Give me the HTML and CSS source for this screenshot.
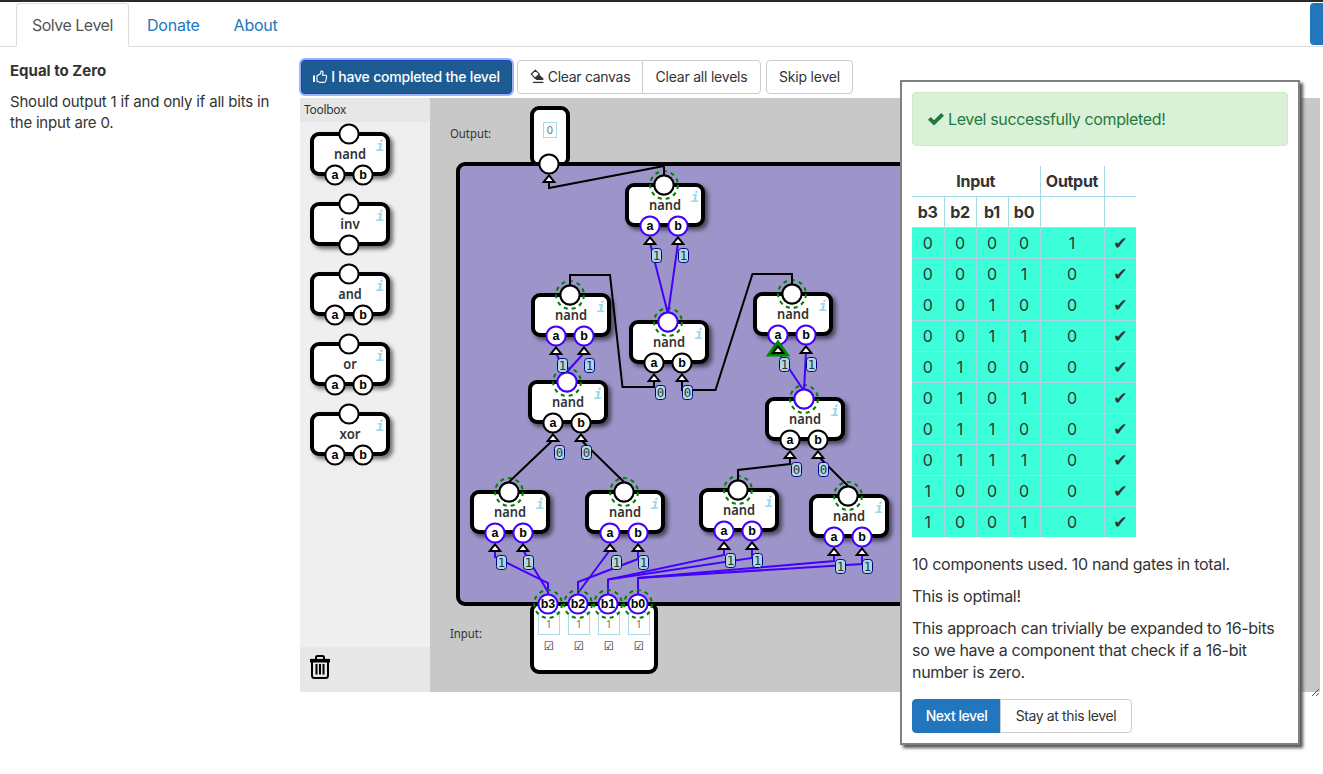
FILE: index.html
```html
<!DOCTYPE html>
<html lang="en">
<head>
<meta charset="utf-8">
<title>Equal to Zero</title>
<link rel="stylesheet" href="styles.css">
</head>
<body>
<header class="topnav">
  <nav class="tabs">
    <a class="tab active">Solve Level</a>
    <a class="tab">Donate</a>
    <a class="tab">About</a>
  </nav>
  <div class="nav-action"></div>
</header>
<main class="layout">
  <aside class="mission">
    <h1>Equal to Zero</h1>
    <p>Should output 1 if and only if all bits in the input are 0.</p>
  </aside>
  <section class="workspace">
    <div class="toolbar">
      <button class="btn primary focused"><svg class="ico-thumb" width="15" height="14" viewBox="0 0 15 14"><path class="thumb-bar" d="M1 5.5V12"/><path class="thumb-hand" d="M4 5.8 L7.4 3.8 Q8.2 2.6 8 1 Q10 .6 10 2.6 Q10 4 9.4 5.2 H12.8 Q14 5.6 13.6 7 L12.6 11.4 Q12.2 12.4 11 12.4 H7.2 L4 11.2Z"/></svg><span>I have completed the level</span></button>
      <div class="group">
        <button class="btn clear"><svg class="ico-eraser" width="15" height="15" viewBox="0 0 15 15"><path class="er-fill" d="M8 4.6 L13 9 Q14.4 11 12.5 11 H6.5 L3.6 8.2Z"/><path class="er-paper" d="M5.3 1.2 L9.3 5.2 L5.2 9.2 L1.2 5.2Z"/><path class="er-line" d="M3 13.4H13.4"/></svg><span>Clear canvas</span></button>
        <button class="btn clear-all">Clear all levels</button>
      </div>
      <button class="btn skip">Skip level</button>
    </div>
    <div class="editor">
      <div class="toolbox">
        <div class="toolbox-title">Toolbox</div>
        <svg class="palette" id="palette" width="130" height="525" viewBox="300 122 130 525"></svg>
        <div class="trash"><svg width="22" height="26" viewBox="0 0 22 26"><path class="trash-lid" d="M1 6.7H21"/><path class="trash-line" d="M7 5V3.5Q7 2 8.5 2H13.5Q15 2 15 3.5V5 M3 7V21.5Q3 24 5.5 24H16.5Q19 24 19 21.5V7"/><path class="trash-line" d="M7.5 10V20.5 M11 10V20.5 M14.5 10V20.5"/></svg></div>
      </div>
      <svg class="board" id="board" width="890" height="594" viewBox="430 98 890 594">
        <text class="io-label" x="450" y="138" textLength="41" lengthAdjust="spacingAndGlyphs">Output:</text>
        <text class="io-label" x="450" y="638" textLength="32" lengthAdjust="spacingAndGlyphs">Input:</text>
        <rect class="shell" x="532" y="108" width="36" height="57" rx="7"/>
        <rect class="shell" x="532" y="604" width="124" height="68" rx="7"/>
        <rect class="frame" x="458" y="164" width="830" height="440" rx="7"/>
        <path class="seam" d="M536 606.5H652V612H536Z"/>
      </svg>
    </div>
    <svg class="grip" width="9" height="8" viewBox="0 0 9 8"><path d="M1 7L8 0M5 7L8 4"/></svg>
  </section>
</main>
<section class="dialog">
  <div class="alert"><svg width="16" height="14" viewBox="0 0 16 14"><path d="M0 7.8L2.8 5L6 8.2L13.2 1L16 3.8L6 13.6Z"/></svg><span>Level successfully completed!</span></div>
  <table class="truth">
    <colgroup><col class="bit"><col class="bit"><col class="bit"><col class="bit"><col class="out"><col class="mark"></colgroup>
    <thead>
      <tr><th colspan="4">Input</th><th>Output</th><th></th></tr>
      <tr><th>b3</th><th>b2</th><th>b1</th><th>b0</th><th></th><th></th></tr>
    </thead>
    <tbody>
      <tr><td>0</td><td>0</td><td>0</td><td>0</td><td>1</td><td class="ok">✔</td></tr>
      <tr><td>0</td><td>0</td><td>0</td><td>1</td><td>0</td><td class="ok">✔</td></tr>
      <tr><td>0</td><td>0</td><td>1</td><td>0</td><td>0</td><td class="ok">✔</td></tr>
      <tr><td>0</td><td>0</td><td>1</td><td>1</td><td>0</td><td class="ok">✔</td></tr>
      <tr><td>0</td><td>1</td><td>0</td><td>0</td><td>0</td><td class="ok">✔</td></tr>
      <tr><td>0</td><td>1</td><td>0</td><td>1</td><td>0</td><td class="ok">✔</td></tr>
      <tr><td>0</td><td>1</td><td>1</td><td>0</td><td>0</td><td class="ok">✔</td></tr>
      <tr><td>0</td><td>1</td><td>1</td><td>1</td><td>0</td><td class="ok">✔</td></tr>
      <tr><td>1</td><td>0</td><td>0</td><td>0</td><td>0</td><td class="ok">✔</td></tr>
      <tr><td>1</td><td>0</td><td>0</td><td>1</td><td>0</td><td class="ok">✔</td></tr>
    </tbody>
  </table>
  <p>10 components used. 10 nand gates in total.</p>
  <p>This is optimal!</p>
  <p>This approach can trivially be expanded to 16-bits<br>so we have a component that check if a 16-bit<br>number is zero.</p>
  <div class="group">
    <button class="btn primary next">Next level</button>
    <button class="btn stay">Stay at this level</button>
  </div>
</section>
<script src="app.js"></script>
</body>
</html>
```
FILE: styles.css
```css
* { box-sizing: border-box; }
body {
  margin: 0;
  height: 774px;
  overflow: hidden;
  position: relative;
  background: #fff;
  color: #333;
  font-family: Inter, "Liberation Sans", sans-serif;
  font-size: 16px;
}
svg { display: block; flex: none; }
.topnav {
  height: 47px;
  border-top: 2px solid #2a292c;
  border-bottom: 1px solid #ddd;
  padding: 1px 0 0 16px;
  display: flex;
  justify-content: space-between;
}
.tabs { display: flex; height: 44px; }
.tab {
  height: 43px;
  padding: 0 15px;
  border: 1px solid transparent;
  border-radius: 4px 4px 0 0;
  line-height: 43px;
  color: #2276bd;
  margin-right: 2px;
  letter-spacing: -0.23px;
  white-space: nowrap;
}
.tab.active {
  width: 113px;
  height: 44px;
  background: #fff;
  border-color: #ddd #ddd #fff;
  color: #555;
  letter-spacing: -0.5px;
}
.nav-action { width: 13px; height: 42px; background: #2276bd; border-radius: 4px 0 0 4px; }
.layout { display: flex; }
.mission { width: 300px; padding: 13px 20px 0 10px; font-size: 15px; line-height: 21px; }
.mission h1 { margin: 0 0 10px; font-size: 15px; line-height: 21px; font-weight: 700; }
.mission p { margin: 0; letter-spacing: -0.2px; }
.workspace { width: 1020px; padding-top: 13px; }
.toolbar { display: flex; height: 34px; margin-bottom: 4px; padding-left: 1px; gap: 5px; }
.group { display: flex; }
.btn {
  display: flex;
  align-items: center;
  justify-content: center;
  height: 34px;
  padding: 0 0 1px;
  border: 1px solid #ccc;
  border-radius: 4px;
  background: #fff;
  color: #333;
  font: 400 14px Inter, "Liberation Sans", sans-serif;
  letter-spacing: -0.22px;
  white-space: nowrap;
}
.btn.primary { background: #2276bd; border-color: #2276bd; color: #fff; font-weight: 500; }
.btn.focused { width: 211px; background: #1d5c92; border-color: #1544b5; box-shadow: 0 0 0 2px #9cb3fa; }
.btn.clear { width: 126px; letter-spacing: -0.3px; }
.btn.clear-all { width: 119px; }
.btn.skip { width: 87px; }
.group .btn:first-child { border-radius: 4px 0 0 4px; }
.group .btn:last-child { border-radius: 0 4px 4px 0; margin-left: -1px; }
.ico-thumb { margin-right: 3px; }
.thumb-bar { stroke: #fff; stroke-width: 2; }
.thumb-hand { fill: none; stroke: #fff; stroke-width: 1.1; stroke-linejoin: round; }
.ico-eraser { margin-right: 3px; }
.er-fill { fill: #333; }
.er-paper { fill: #fff; stroke: #333; stroke-width: 1.2; stroke-linejoin: round; }
.er-line { fill: none; stroke: #333; stroke-width: 1.3; }
.editor { display: flex; height: 594px; }
.toolbox { width: 130px; background: #efefef; }
.toolbox-title {
  height: 24px;
  padding-left: 4px;
  background: #e7e7e7;
  font: 12px/24px "Noto Sans", sans-serif;
  letter-spacing: -0.3px;
}
.trash { height: 45px; padding: 7px 9px; background: #e7e7e7; }
.trash-lid { stroke: #000; stroke-width: 3.6; }
.trash-line { fill: none; stroke: #000; stroke-width: 2; }
.board { background: #c8c8c8; }
.grip { margin: -3px 0 0 1011px; }
.grip path { stroke: #555; stroke-width: 1; fill: none; }

.frame { fill: #9d95c9; stroke: #000; stroke-width: 4; }
.shell { fill: #fff; stroke: #000; stroke-width: 4; }
.seam { fill: #fff; }
.gate-box { fill: #fff; stroke: #000; stroke-width: 4; filter: drop-shadow(3px 3px 2px rgba(0, 0, 0, .55)); }
.gate-name { font: 600 14px "Noto Sans", sans-serif; fill: #333; text-anchor: middle; }
.gate-info { font: italic 700 14px "DejaVu Sans Mono", monospace; fill: #9bd8e8; text-anchor: middle; }
.port { fill: #fff; stroke: #000; stroke-width: 2; }
.port.live { stroke: #40f; }
.port-name { font: 700 12.5px "Liberation Sans", sans-serif; fill: #000; text-anchor: middle; }
.halo { fill: none; stroke: #008000; stroke-width: 2; stroke-dasharray: 4 4; }
.wire { fill: none; stroke: #000; stroke-width: 2; }
.wire.live { stroke: #40f; }
.arrow { fill: #fff; stroke: #000; stroke-width: 2; }
.arrow-hot { fill: #008a00; }
.badge { fill: #add8e6; stroke: #000080; stroke-width: 1; }
.badge-text { font: 12.5px "DejaVu Sans Mono", monospace; fill: #333; text-anchor: middle; }
.value { fill: #fff; stroke: #add8e6; stroke-width: 1; }
.value-text { font: 11px "Noto Sans", sans-serif; fill: #777; text-anchor: middle; }
.check-text { font: 11.5px "DejaVu Sans", sans-serif; fill: #222; text-anchor: middle; }
.io-label { font: 12px "Noto Sans", sans-serif; fill: #333; }

.dialog {
  position: absolute;
  left: 900px;
  top: 80px;
  width: 400px;
  height: 665px;
  padding: 10px;
  border: 2px solid #808080;
  background: #fff;
  box-shadow: 3px 3px 3px #555;
}
.alert {
  display: flex;
  align-items: center;
  height: 54px;
  padding: 0 15px;
  margin-bottom: 20px;
  border: 1px solid #cdeac4;
  border-radius: 4px;
  background: #daf1d8;
  color: #1e7b3c;
  letter-spacing: -0.37px;
}
.alert svg { margin-right: 4px; }
.alert path { fill: #1e7b3c; }
.truth { width: 224px; table-layout: fixed; border-collapse: collapse; margin-bottom: 16px; }
.bit { width: 32px; }
.out { width: 64px; }
.mark { width: 32px; }
.truth th, .truth td { height: 31px; padding: 0; text-align: center; line-height: 22px; border: 1px solid #a5dbe8; }
.truth tr > :first-child { border-left: 0; }
.truth tr > :last-child { border-right: 0; }
.truth thead tr:first-child th { border-top: 0; height: 30px; }
.truth th { font-weight: 700; letter-spacing: -0.3px; }
.truth td { background: #3cffda; border-color: #a9d5e5; }
.truth tbody tr:last-child td { border-bottom: 0; }
.truth .ok { font-family: "DejaVu Sans", sans-serif; font-size: 17px; }
.dialog p { margin: 0 0 10px; line-height: 22px; letter-spacing: -0.29px; white-space: nowrap; }
.dialog .group { margin-top: 16px; }
.next { width: 89px; letter-spacing: -0.45px; }
.stay { width: 132px; letter-spacing: -0.38px; }
```
FILE: app.js
```javascript
const NS = "http://www.w3.org/2000/svg";
const board = document.getElementById("board");
const palette = document.getElementById("palette");
const nameWidth = { nand: 32, inv: 19.5, and: 23.5, or: 13.5, xor: 21 };

function add(parent, tag, attrs, text) {
  const el = document.createElementNS(NS, tag);
  for (const key in attrs) el.setAttribute(key, attrs[key]);
  if (text !== undefined) el.textContent = text;
  parent.appendChild(el);
  return el;
}

function port(parent, x, y, live, name) {
  add(parent, "circle", { class: live ? "port live" : "port", cx: x, cy: y, r: 9.6 });
  if (name) add(parent, "text", { class: "port-name", x: x, y: y + 4.3 }, name);
}

function halo(x, y) {
  add(board, "circle", { class: "halo", cx: x, cy: y, r: 13.9 });
}

function arrow(x, y) {
  add(board, "path", { class: "arrow", d: `M${x} ${y + 11.3}L${x + 5.3} ${y + 18}H${x - 5.3}Z` });
}

function badge(x, y, value) {
  add(board, "rect", { class: "badge", x: x - 0.5, y: y - 0.5, width: 10, height: 14, rx: 3 });
  add(board, "text", { class: "badge-text", x: x + 4.5, y: y + 11 }, value);
}

// x and y are the centre of the output port
function gate(parent, x, y, name, inputs, outLive, inLive) {
  add(parent, "rect", { class: "gate-box", x: x - 37, y: y, width: 76, height: 40, rx: 7 });
  if (parent === board) halo(x, y);
  add(parent, "text", { class: "gate-name", x: x + 1, y: y + 25, textLength: nameWidth[name], lengthAdjust: "spacingAndGlyphs" }, name);
  add(parent, "text", { class: "gate-info", x: x + 31, y: y + 17 }, "i");
  port(parent, x, y, outLive);
  inputs.forEach(([dx, label]) => port(parent, x + dx, y + 41, inLive, label));
}

const pair = [[-14, "a"], [14, "b"]];
[["nand", pair], ["inv", [[0, ""]]], ["and", pair], ["or", pair], ["xor", pair]]
  .forEach(([name, inputs], i) => gate(palette, 349, 134 + i * 70, name, inputs, false, false));

// [live, points]
const wires = [
  [0, "549,180 549,188 664,166 664,180"],
  [1, "650,243 668,314"], [1, "678,243 668,314"],
  [1, "556,353 567,376"], [1, "584,353 565,374"],
  [0, "654,378 654,387 622.5,387 610,275 570,275 570,288"],
  [0, "682,378 682,390 715.5,390 752.5,274 792,274 792,288"],
  [1, "778,352 804,391"], [1, "806,352 804,391"],
  [0, "553,440 509,482"], [0, "581,440 624,482"],
  [0, "790,456 790,464 738,470 738,482"], [0, "818,456 848,486"],
  [1, "495,550 495,557 548,583 548,596"], [1, "523,550 548,592"],
  [1, "610,550 578,593"], [1, "638,550 638,559 578,582 578,596"],
  [1, "724,548 724,555 608,579.5 608,596"], [1, "752,548 752,558 608,579.5"],
  [1, "834,554 834,561 638,578 638,596"], [1, "862,554 862,564 638,578"]
];

// [x, y, output live, inputs live]
const gates = [
  [664, 185, 0, 1], [570, 295, 0, 1], [668, 322, 1, 0], [792, 294, 0, 1],
  [567, 382, 1, 0], [804, 399, 1, 0], [509, 492, 0, 1], [624, 492, 0, 1],
  [738, 490, 0, 1], [848, 496, 0, 1]
];

gates.forEach(([x, y, o, n]) => gate(board, x, y, "nand", pair, o, n));
wires.forEach(([live, points]) => add(board, "polyline", { class: live ? "wire live" : "wire", points: points }));
gates.forEach(([x, y, o]) => port(board, x, y, o));

gates.forEach(([x, y, o, n]) => {
  if (x === 792) add(board, "path", { class: "arrow-hot", d: "M778 339.5L790.4 356.5H765.6Z" });
  arrow(x - 14, y + 41);
  arrow(x + 14, y + 41);
  badge(x - 12, y + 64, n);
  badge(x + 15, y + 64, n);
});

add(board, "rect", { class: "value", x: 543.5, y: 122.5, width: 13, height: 15 });
add(board, "text", { class: "value-text", x: 550, y: 133.5 }, "0");
port(board, 549, 164, false);
arrow(549, 164);

[548, 578, 608, 638].forEach((x, i) => {
  add(board, "rect", { class: "value", x: x - 9.5, y: 612.5, width: 21, height: 22 });
  halo(x, 604);
  port(board, x, 604, true, "b" + (3 - i));
  add(board, "text", { class: "value-text", x: x + 1, y: 628 }, "1");
  add(board, "text", { class: "check-text", x: x + 1, y: 650 }, "☑");
});
```
